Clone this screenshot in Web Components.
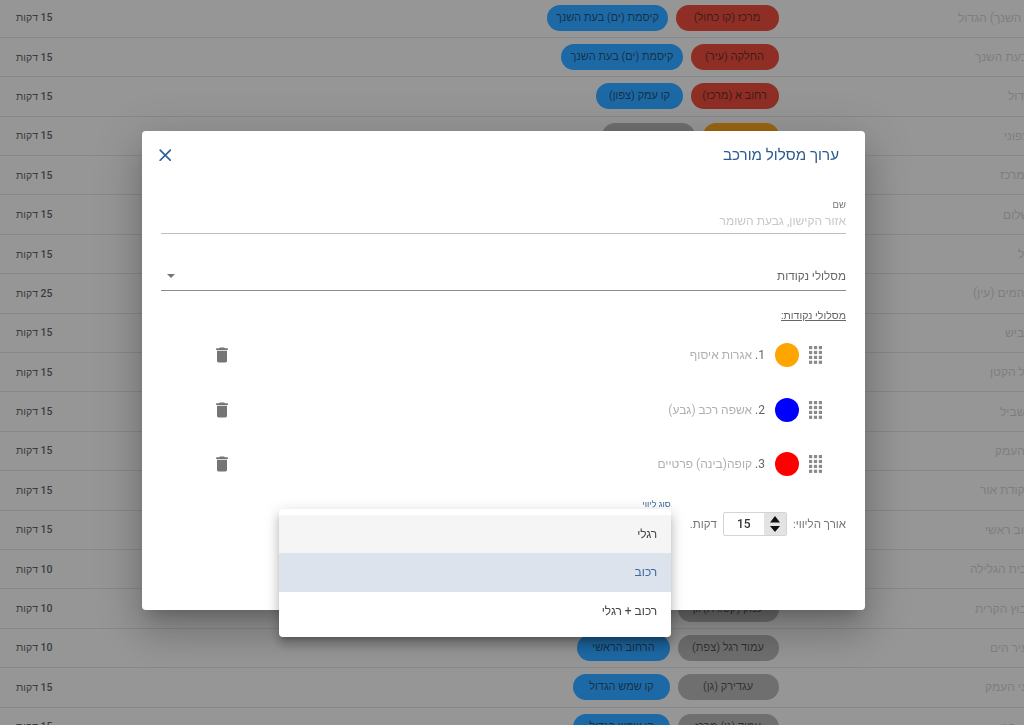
<!DOCTYPE html>
<html lang="he" dir="rtl">
<head>
<meta charset="utf-8">
<title>ערוך מסלול מורכב</title>
<style>
html, body { margin: 0; height: 725px; overflow: hidden; background: #969696; }
body { font-family: Roboto, "Liberation Sans", sans-serif; }
</style>
</head>
<body>
<route-table></route-table>
<edit-dialog></edit-dialog>

<script>
const routes = [
  ['נמל (הבעת השנך) הגדול', '15', [['red', 'מרכז (קו כחול)', 103], ['blue', 'קיסמת (ים) בעת השנך', 121]], 958],
  ['קיסמת הבעת השנך', '15', [['red', 'החלקה (עיר)', 88], ['blue', 'קיסמת (ים) בעת השנך', 122]], 975],
  ['העמק הגדול', '15', [['red', 'רחוב א (מרכז)', 88], ['blue', 'קו עמק (צפון)', 87]], 1008],
  ['העמק הצפוני', '15', [['orange', 'גשר העמק', 76], ['grey', 'קו העמק', 93]], 1004],
  ['מרכז', '15', [], 1000],
  ['השלום', '15', [], 1003],
  ['רגל', '15', [], 1018],
  ['אמת המים (עין)', '25', [], 973],
  ['כביש', '15', [], 1005],
  ['הנחל הקטן', '15', [], 990],
  ['השביל', '15', [], 1000],
  ['הר העמק', '15', [], 995],
  ['נקודת אור', '15', [], 980],
  ['רחוב ראשי', '15', [], 985],
  ['בית הגלילה', '10', [], 970],
  ['קיבוץ הקרית', '10', [['grey', 'עמק (קטורת) גן', 101], ['blue', 'הר הגליל', 97]], 975],
  ['עיר הים', '10', [['grey', 'עמוד רגל (צפת)', 101], ['blue', 'הרחוב הראשי', 93]], 990],
  ['גני העמק', '15', [['grey', 'עגדירק (גן)', 101], ['blue', 'קו שמש הגדול', 97]], 985],
  ['הגן', '15', [['grey', 'עמוד (גן) מרכז', 101], ['blue', 'קו שמש הגדול', 97]], 1000],
];

class RoutePill extends HTMLElement {
  constructor() {
    super();
    this.attachShadow({mode: 'open'}).innerHTML = `
      <style>
      :host {
        display: block;
        box-sizing: border-box;
        height: 26px;
        line-height: 26px;
        border-radius: 13px;
        padding: 0 9px;
        font-size: 11px;
        text-align: center;
        white-space: nowrap;
        overflow: hidden;
        color: rgba(20, 20, 20, .7);
      }
      :host([tone=red]) { background: #8f2e25; }
      :host([tone=blue]) { background: #1d69a5; }
      :host([tone=grey]) { background: #6f6f6f; }
      :host([tone=orange]) { background: #9a6511; }
      </style>
      <slot></slot>`;
  }
}

class RouteRow extends HTMLElement {
  constructor() {
    super();
    this.attachShadow({mode: 'open'}).innerHTML = `
      <style>
      :host {
        display: flex;
        align-items: center;
        box-sizing: border-box;
        height: 39.4px;
        width: 1024px;
        border-bottom: 1px solid #888;
      }
      .name {
        flex: 0 0 245.5px;
        min-width: 0;
        direction: ltr;
        display: flex;
        font-size: 12px;
        color: #7e7e7e;
        white-space: nowrap;
      }
      .pills {
        flex: 1;
        display: flex;
        gap: 7.5px;
      }
      .time {
        flex: 0 0 auto;
        margin-left: 16px;
        font-size: 10.5px;
        font-weight: 500;
        color: #3c3c3c;
      }
      </style>
      <div class="name"><slot name="name"></slot></div>
      <div class="pills"><slot></slot></div>
      <div class="time"><slot name="time"></slot></div>`;
  }
}

class RouteTable extends HTMLElement {
  constructor() {
    super();
    const shadow = this.attachShadow({mode: 'open'});
    shadow.innerHTML = `
      <style>
      :host { display: block; margin-top: -1.5px; width: 1024px; direction: rtl; }
      </style>`;
    for (const [name, time, pills, left] of routes) {
      const row = document.createElement('route-row');
      const n = document.createElement('span');
      n.slot = 'name';
      n.textContent = name;
      n.dir = 'rtl';
      n.style.marginLeft = (left - 778.5) + 'px';
      n.style.flex = 'none';
      row.appendChild(n);
      const t = document.createElement('span');
      t.slot = 'time';
      t.textContent = time + ' דקות';
      row.appendChild(t);
      for (const [tone, text, width] of pills) {
        const p = document.createElement('route-pill');
        p.setAttribute('tone', tone);
        p.style.width = width + 'px';
        p.textContent = text;
        row.appendChild(p);
      }
      shadow.appendChild(row);
    }
  }
}

class PointRow extends HTMLElement {
  constructor() {
    super();
    const dots = [];
    for (let y = 0; y < 4; y++) for (let x = 0; x < 3; x++) {
      dots.push(`<rect x="${x * 4.9}" y="${y * 4.9}" width="3.2" height="3.2"/>`);
    }
    this.attachShadow({mode: 'open'}).innerHTML = `
      <style>
      :host {
        display: flex;
        align-items: center;
        height: 54.5px;
        padding: 0 24px 0 51px;
        font-size: 12px;
        color: #b0b0b0;
      }
      .dots { width: 13px; height: 18px; fill: #8a8a8a; flex: none; }
      .dot {
        width: 24px;
        height: 24px;
        border-radius: 50%;
        margin: 0 10px;
        background: var(--dot);
        flex: none;
      }
      b { font-weight: 400; color: #666; }
      .trash { margin-right: auto; width: 20px; height: 20px; fill: #757575; flex: none; }
      </style>
      <svg class="dots" viewBox="0 0 13 18">${dots.join('')}</svg>
      <span class="dot" style="--dot:${this.getAttribute('color')}"></span>
      <span><b>${this.getAttribute('n')}.</b> <slot></slot></span>
      <svg class="trash" viewBox="0 0 24 24"><path d="M6 19c0 1.1.9 2 2 2h8c1.1 0 2-.9 2-2V7H6v12zM19 4h-3.500l-1-1h-5l-1 1H5v2h14V4z"/></svg>`;
  }
}

class NumberBox extends HTMLElement {
  constructor() {
    super();
    this.attachShadow({mode: 'open'}).innerHTML = `
      <style>
      :host {
        display: flex;
        box-sizing: border-box;
        width: 64px;
        height: 24px;
        border: 1px solid #d4d4d4;
        border-radius: 2px;
        background: #fff;
      }
      .spin {
        width: 22px;
        background: #e3e3e3;
        flex: none;
        display: flex;
      }
      .spin svg { width: 22px; height: 22px; fill: #111; }
      .val {
        flex: 1;
        text-align: center;
        font-size: 12px;
        font-weight: 500;
        line-height: 22px;
        color: #333;
      }
      </style>
      <div class="spin"><svg viewBox="0 0 22 22"><path d="M11 3 16 9.500H6zM11 19 6 13h10z"/></svg></div>
      <div class="val"><slot></slot></div>`;
  }
}

class SelectMenu extends HTMLElement {
  constructor() {
    super();
    this.attachShadow({mode: 'open'}).innerHTML = `
      <style>
      :host {
        display: block;
        position: relative;
        width: 392px;
        align-self: flex-start;
        margin-top: -13px;
        margin-right: 19px;
      }
      .label {
        font-size: 9px;
        line-height: 11px;
        color: #3a6aa0;
        font-weight: 500;
      }
      .panel {
        position: absolute;
        top: 9.5px;
        left: 0;
        right: 0;
        padding: 6px 0;
        background: #fff;
        border-radius: 4px;
        box-shadow: 0 5px 5px -3px rgba(0,0,0,.2), 0 8px 10px 1px rgba(0,0,0,.14), 0 3px 14px 2px rgba(0,0,0,.12);
        font-size: 12px;
        color: #444;
      }
      .item { height: 38.7px; line-height: 38.7px; padding: 0 13.5px; }
      .hover { background: #f5f5f5; }
      .active { background: #dde3ec; color: #3a6aa0; }
      </style>
      <div class="label">סוג ליווי</div>
      <div class="panel">
        <div class="item hover">רגלי</div>
        <div class="item active">רכוב</div>
        <div class="item">רכוב + רגלי</div>
      </div>`;
  }
}

class EditDialog extends HTMLElement {
  constructor() {
    super();
    this.attachShadow({mode: 'open'}).innerHTML = `
      <style>
      :host {
        position: fixed;
        top: 0;
        left: 0;
        width: 1024px;
        height: 725px;
        box-sizing: border-box;
        padding: 15px 17px 0 0;
        display: flex;
        align-items: center;
        justify-content: center;
        direction: rtl;
      }
      .box {
        box-sizing: border-box;
        width: 723px;
        height: 479px;
        padding: 0 19px;
        background: #fff;
        border-radius: 4px;
        box-shadow: 0 11px 15px -7px rgba(0,0,0,.2), 0 24px 38px 3px rgba(0,0,0,.14), 0 9px 46px 8px rgba(0,0,0,.12);
      }
      header {
        height: 49px;
        display: flex;
        align-items: center;
        justify-content: space-between;
        padding-right: 7px;
        margin-left: -2.5px;
      }
      h2 { margin: 0; font-size: 15.2px; font-weight: 400; color: #2c5a8e; }
      .close { width: 12.500px; height: 12.500px; stroke: #2f6296; stroke-width: 1.7; fill: none; }
      .field { margin-top: 19.5px; border-bottom: 1px solid #bdbdbd; height: 34px; }
      .field small { display: block; font-size: 9.5px; line-height: 12px; color: #777; }
      .field div { font-size: 12px; line-height: 21px; color: #c8c8c8; }
      .select {
        margin-top: 32px;
        height: 24px;
        border-bottom: 1px solid #8c8c8c;
        display: flex;
        justify-content: space-between;
        font-size: 11.7px;
        line-height: 20px;
        color: #666;
      }
      .arrow {
        width: 0;
        height: 0;
        margin: 8px 0 0 6px;
        border: 4px solid transparent;
        border-top-color: #757575;
        border-bottom: 0;
      }
      .points { margin: 18px 0 4.750px; font-size: 10.6px; line-height: 14px; color: #666; text-decoration: underline; }
      .dur {
        margin-top: 21px;
        display: flex;
        align-items: center;
        font-size: 11.500px;
        color: #777;
        height: 24px;
      }
      number-box { margin: 0 6px; }
      </style>
      <div class="box">
        <header>
          <h2>ערוך מסלול מורכב</h2>
          <svg class="close" viewBox="0 0 13 13"><path d="M.7.7l11.600 11.600M12.300.7.7 12.300"/></svg>
        </header>
        <div class="field"><small>שם</small><div>אזור הקישון, גבעת השומר</div></div>
        <div class="select"><span>מסלולי נקודות</span><span class="arrow"></span></div>
        <div class="points">מסלולי נקודות:</div>
        <point-row color="#ffa500" n="1">אגרות איסוף</point-row>
        <point-row color="#0000ff" n="2">אשפה רכב (גבע)</point-row>
        <point-row color="#ff0000" n="3">קופה(בינה) פרטיים</point-row>
        <div class="dur">
          <span>אורך הליווי:</span>
          <number-box>15</number-box>
          <span>דקות.</span>
          <select-menu></select-menu>
        </div>
      </div>`;
  }
}

customElements.define('route-pill', RoutePill);
customElements.define('route-row', RouteRow);
customElements.define('route-table', RouteTable);
customElements.define('point-row', PointRow);
customElements.define('number-box', NumberBox);
customElements.define('select-menu', SelectMenu);
customElements.define('edit-dialog', EditDialog);
</script>
</body>
</html>
